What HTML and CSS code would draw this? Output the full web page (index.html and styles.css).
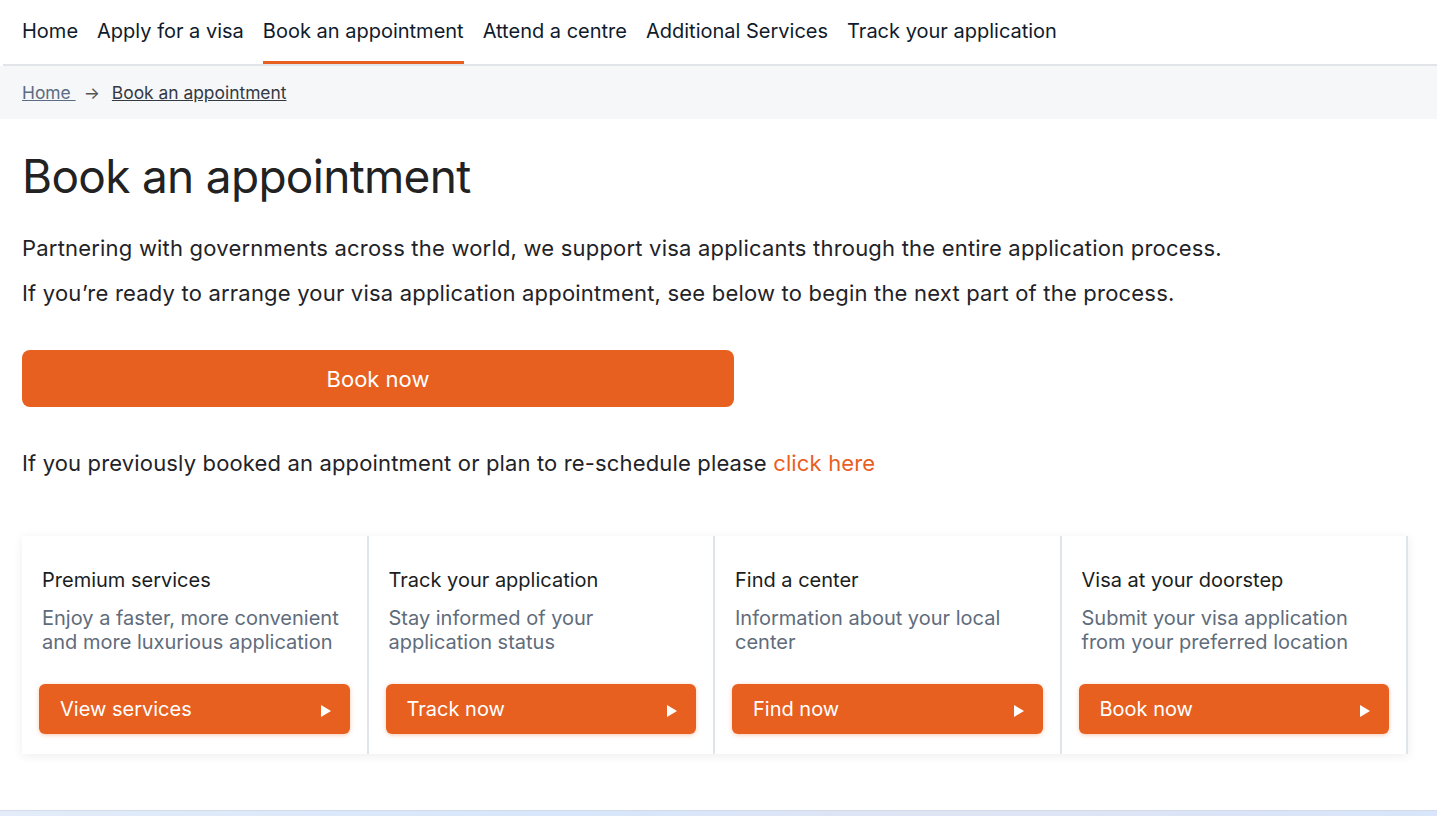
FILE: index.html
```html
<!DOCTYPE html>
<html lang="en">
<head>
<meta charset="utf-8">
<title>Book an appointment</title>
<link rel="stylesheet" href="styles.css">
</head>
<body>
<header class="topnav">
  <nav class="nav-list">
    <a class="nav-item" href="#">Home</a>
    <a class="nav-item" href="#">Apply for a visa</a>
    <a class="nav-item active" href="#">Book an appointment</a>
    <a class="nav-item" href="#">Attend a centre</a>
    <a class="nav-item" href="#">Additional Services</a>
    <a class="nav-item" href="#">Track your application</a>
  </nav>
</header>
<div class="breadcrumb">
  <a class="crumb-home" href="#">Home </a>
  <span class="crumb-arrow">&#8594;</span>
  <a class="crumb-current" href="#">Book an appointment</a>
</div>
<main class="main">
  <h1 class="title">Book an appointment</h1>
  <p class="lead">Partnering with governments across the world, we support visa applicants through the entire application process.</p>
  <p class="lead">If you’re ready to arrange your visa application appointment, see below to begin the next part of the process.</p>
  <a class="book-btn" href="#">Book now</a>
  <p class="lead resched">If you previously booked an appointment or plan to re-schedule please <a class="link" href="#">click here</a></p>
  <section class="cards">
    <div class="card">
      <h3 class="card-title">Premium services</h3>
      <p class="card-desc">Enjoy a faster, more convenient and more luxurious application</p>
      <a class="card-btn" href="#"><span>View services</span><span class="tri"></span></a>
    </div>
    <div class="card">
      <h3 class="card-title">Track your application</h3>
      <p class="card-desc">Stay informed of your application status</p>
      <a class="card-btn" href="#"><span>Track now</span><span class="tri"></span></a>
    </div>
    <div class="card">
      <h3 class="card-title">Find a center</h3>
      <p class="card-desc">Information about your local center</p>
      <a class="card-btn" href="#"><span>Find now</span><span class="tri"></span></a>
    </div>
    <div class="card">
      <h3 class="card-title">Visa at your doorstep</h3>
      <p class="card-desc">Submit your visa application from your preferred location</p>
      <a class="card-btn" href="#"><span>Book now</span><span class="tri"></span></a>
    </div>
  </section>
</main>
<footer class="footer-strip"></footer>
</body>
</html>
```
FILE: styles.css
```css
* { box-sizing: border-box; }
html, body { margin: 0; padding: 0; }
body {
  font-family: Inter, "Noto Sans", sans-serif;
  color: #1f2328;
  background: #fff;
  overflow: hidden;
  height: 816px;
}
a { text-decoration: none; color: inherit; }

.topnav {
  border-bottom: 2px solid #e1e4e8;
  margin-left: 3px;
}
.nav-list {
  display: flex;
  gap: 19px;
  padding-left: 19px;
}
.nav-item {
  font-size: 20px;
  color: #0f1b2c;
  height: 64px;
  line-height: 63px;
  border-bottom: 3px solid transparent;
}
.nav-item.active { border-bottom-color: #e8601f; }

.breadcrumb {
  background: #f6f7f9;
  height: 53px;
  display: flex;
  align-items: center;
  padding-left: 22px;
  font-size: 17.4px;
}
.crumb-home {
  color: #5b6d82;
  text-decoration: underline;
  white-space: pre;
}
.crumb-arrow {
  color: #555;
  margin: 0 12px 0 8px;
  font-size: 17px;
}
.crumb-current {
  color: #333a44;
  text-decoration: underline;
}

.main { padding: 0 22px; }
.title {
  font-size: 46px;
  font-weight: 400;
  letter-spacing: -0.7px;
  line-height: 58px;
  margin: 28px 0 28px;
  color: #222;
}
.lead {
  font-size: 22px;
  letter-spacing: 0.2px;
  line-height: 30px;
  margin: 0 0 15px;
  color: #1f2328;
}
.book-btn {
  display: flex;
  align-items: center;
  justify-content: center;
  width: 712px;
  height: 57px;
  margin-top: 42px;
  background: #e8601f;
  color: #fff;
  font-size: 22px;
  border-radius: 8px;
}
.resched { margin-top: 41px; margin-bottom: 0; letter-spacing: 0.15px; }
.link { color: #e8601f; }

.cards {
  display: grid;
  grid-template-columns: repeat(4, 1fr);
  width: 1386px;
  margin-top: 58px;
  box-shadow: 0 2px 10px rgba(0,0,0,0.07);
  background: #fff;
}
.card {
  display: flex;
  flex-direction: column;
  padding: 32px 17px 20px;
  border-right: 2px solid #e0e5eb;
  height: 218px;
}
.card-title {
  font-size: 20px;
  font-weight: 400;
  line-height: 24px;
  margin: 0 0 14px 3px;
  color: #1a1d21;
}
.card-desc {
  font-size: 20px;
  line-height: 24px;
  margin: 0 6px 0 3px;
  color: #5f6c7b;
  flex: 1;
}
.card-btn {
  display: flex;
  align-items: center;
  justify-content: space-between;
  height: 50px;
  padding: 0 19px 0 21px;
  background: #e8601f;
  color: #fff;
  font-size: 20px;
  border-radius: 6px;
  box-shadow: 0 1px 4px rgba(232,96,31,0.35);
}
.tri {
  width: 0;
  height: 0;
  border-top: 6px solid transparent;
  border-bottom: 6px solid transparent;
  border-left: 10px solid #fff;
  margin-top: 4px;
}

.footer-strip {
  position: absolute;
  left: 0;
  right: 0;
  top: 810px;
  height: 6px;
  background: linear-gradient(90deg, #e3ecf8, #d7e6fb 40%, #dfe4f2 65%, #d8e5fa);
  border-top: 1px solid #d3dbe8;
}
```
